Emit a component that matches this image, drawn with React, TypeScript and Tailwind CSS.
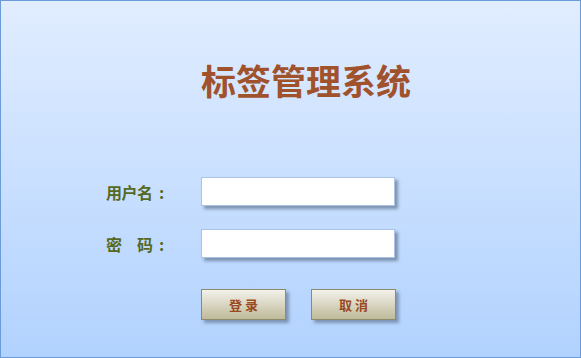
import React from 'react';

const cjk = { fontFamily: '"Noto Sans CJK SC", "Noto Sans", sans-serif' };

function Field({ label, type = 'text' }: { label: string; type?: string }) {
  return (
    <div className="flex items-center">
      <label className="w-[95px] flex text-[16px] font-bold leading-[20px] text-[#55691f]">
        <span className="w-[52px] tracking-[-0.5px]">{label}</span>
        <span className="ml-[1px]">:</span>
      </label>
      <input
        type={type}
        className="w-[194px] h-[29px] border border-[#a9c4e6] bg-white outline-none shadow-[3px_3px_3px_rgba(70,85,110,0.55)]"
      />
    </div>
  );
}

function Btn({ children }: { children: React.ReactNode }) {
  return (
    <button className="w-[85px] h-[31px] border border-[#8c8c6c] bg-gradient-to-b from-[#f3f2ec] to-[#bfba99] text-[13px] font-bold text-[#9a4a1e] shadow-[3px_3px_3px_rgba(70,85,110,0.5)]">
      {children}
    </button>
  );
}

export default function App() {
  return (
    <div
      style={cjk}
      className="w-[581px] h-[358px] border border-[#6b9bd9] bg-gradient-to-b from-[#e1edff] to-[#b1d2fe] flex flex-col"
    >
      {/* title */}
      <h1 className="mt-[57px] ml-[200px] text-[35px] font-bold leading-[44px] text-[#a0522d]">标签管理系统</h1>

      {/* form */}
      <div className="mt-[75px] ml-[105px] flex flex-col gap-[23px]">
        <Field label="用户名" />
        <Field label="密　码" type="password" />
      </div>

      <div className="mt-[31px] ml-[200px] flex gap-[25px]">
        <Btn>登 录</Btn>
        <Btn>取 消</Btn>
      </div>
    </div>
  );
}
